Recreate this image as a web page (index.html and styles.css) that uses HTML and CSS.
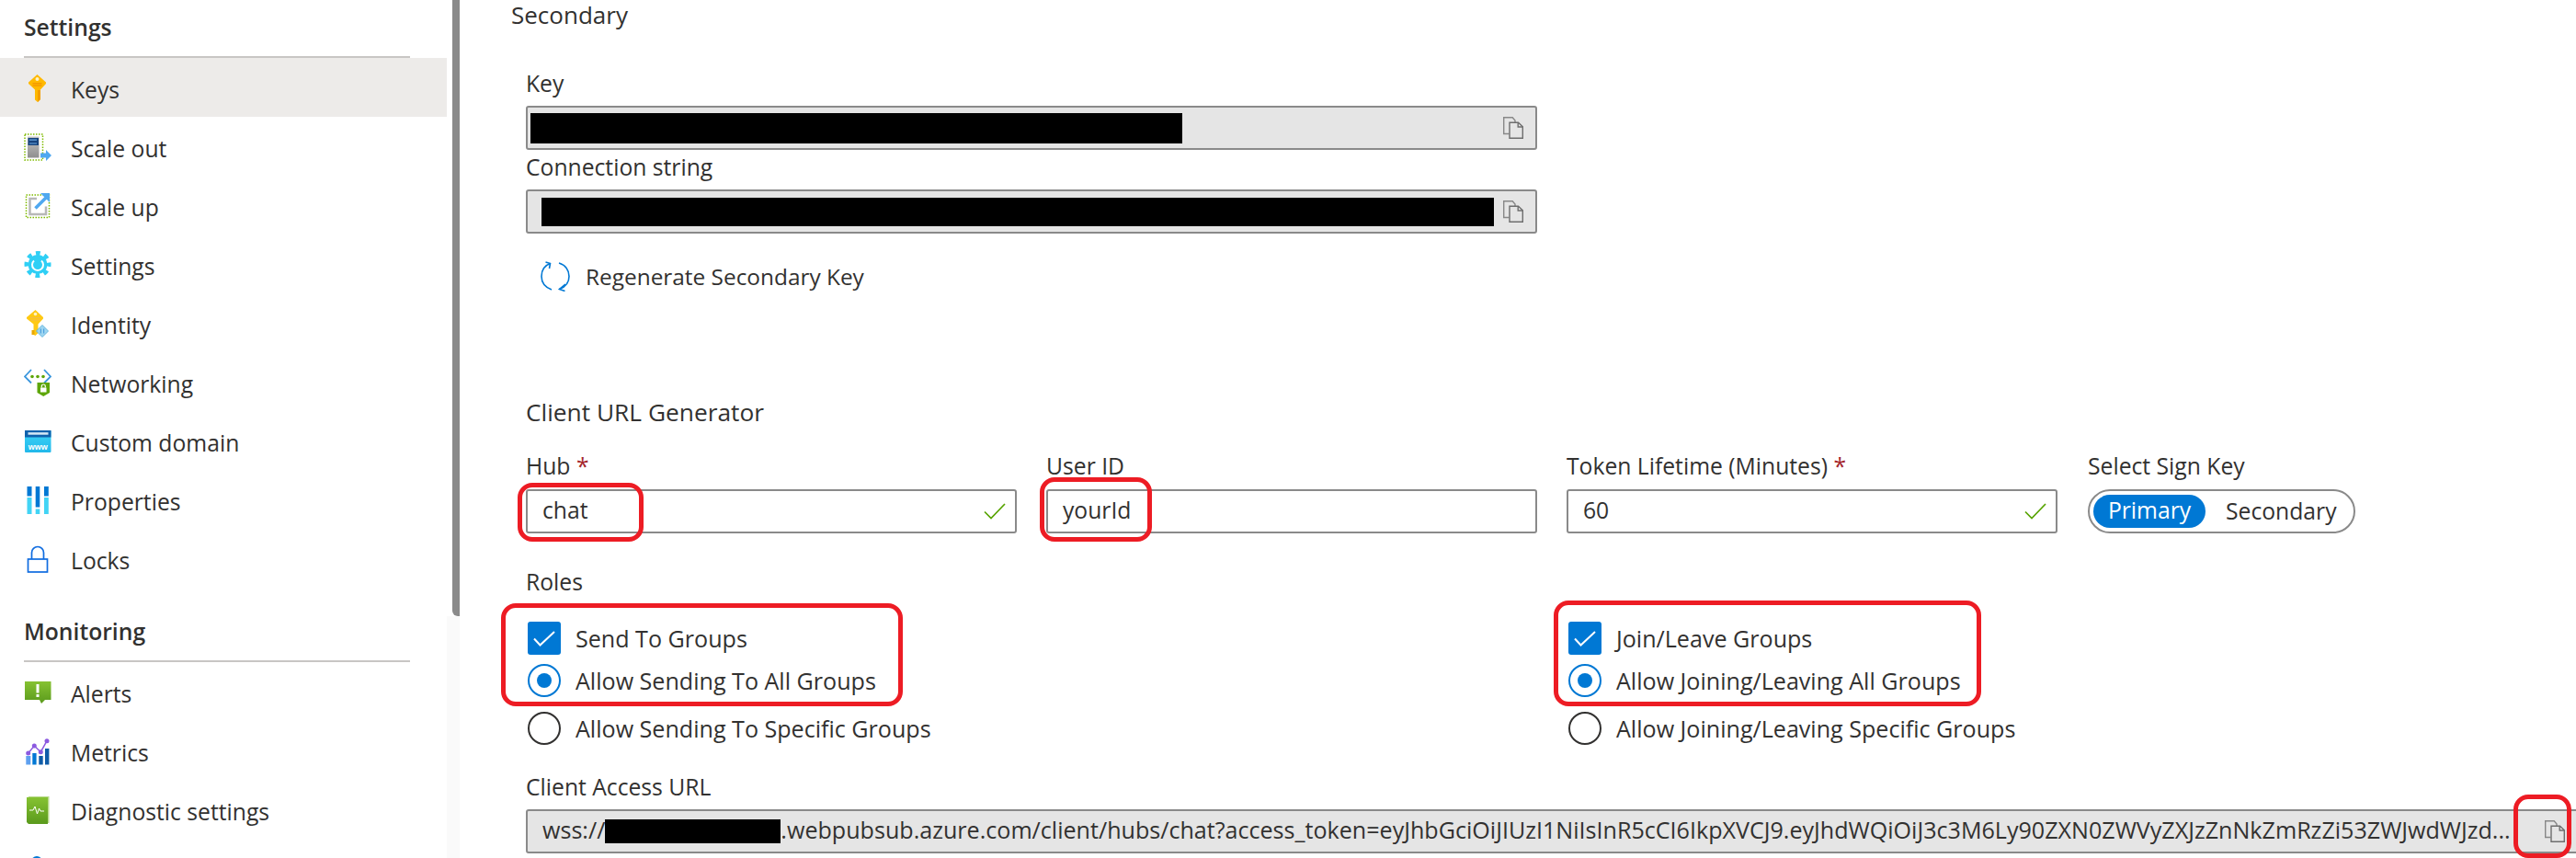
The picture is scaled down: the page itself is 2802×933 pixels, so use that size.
FILE: index.html
```html
<!DOCTYPE html>
<html>
<head>
  <title>Keys - Web PubSub</title>
  <link rel="stylesheet" href="styles.css">
</head>
<body>
<svg class="defs" width="0" height="0">
  <defs>
    <linearGradient id="grey" x1="0" y1="0" x2="0" y2="1"><stop offset="0" stop-color="#c4c4c4"/><stop offset="1" stop-color="#8f8f8f"/></linearGradient>
    <linearGradient id="green" x1="0" y1="0" x2="0" y2="1"><stop offset="0" stop-color="#86c232"/><stop offset="1" stop-color="#5a9a1c"/></linearGradient>
    <linearGradient id="cyan" x1="0" y1="0" x2="0" y2="1"><stop offset="0" stop-color="#3cd4f7"/><stop offset="1" stop-color="#22b8ea"/></linearGradient>
    <symbol id="copy" viewBox="0 0 22 24">
      <path d="M6.5 18.5H.7V.7h9.5L13 4v2" fill="none" stroke="#888" stroke-width="1.4"/>
      <path d="M7 6.2h9.5l4.8 4.6v12.5H7z" fill="none" stroke="#6e6e6e" stroke-width="1.4"/>
      <path d="M16.2 6.2v4.8h5" fill="none" stroke="#6e6e6e" stroke-width="1.4"/>
    </symbol>
    <symbol id="valid" viewBox="0 0 24 18">
      <path d="M1 9.5 8 16.5 23 1" fill="none" stroke="#57a300" stroke-width="1.7"/>
    </symbol>
    <symbol id="tick" viewBox="0 0 36 36">
      <path d="M7 18.5 13.5 25.5 29 11" fill="none" stroke="#fff" stroke-width="2"/>
    </symbol>
  </defs>
</svg>

<div class="page">
  <nav class="sidebar">
    <div class="nav-title first">Settings</div>
    <a class="nav-item selected">
      <svg class="nav-icon" viewBox="0 0 30 30">
        <path d="M14.500 0 24 8.500v1.500l-6 6.500V27l-3 3-3-2.500V16.500L5 10V8.500z" fill="#ffb900"/>
        <path d="M15 17h3v10l-3 3z" fill="#f29d00"/>
        <circle cx="14.500" cy="5" r="2" fill="#fff3c4"/>
        <path d="M9.500 9.800h10M9.500 12h10" stroke="#f08a00" stroke-width="1"/>
      </svg>
      Keys
    </a>
    <a class="nav-item">
      <svg class="nav-icon" viewBox="0 0 30 30">
        <rect x="1" y="1" width="19.500" height="28" fill="none" stroke="#7fba00" stroke-width="1.500" stroke-dasharray="1.500 1.500"/>
        <rect x="4" y="3.500" width="12.500" height="23" fill="url(#grey)"/>
        <rect x="4.500" y="5" width="11.500" height="8" fill="#17437c"/>
        <path d="M6 7.200h8M6 11h8" stroke="#6aa5e0" stroke-width="1.200"/>
        <path d="M18 21.500h6V18l6 6-6 6v-3.500h-6z" fill="#4fa8f0"/>
      </svg>
      Scale out
    </a>
    <a class="nav-item">
      <svg class="nav-icon" viewBox="0 0 30 30">
        <rect x="2.500" y="3" width="25" height="24.500" fill="none" stroke="#7fba00" stroke-width="1.500" stroke-dasharray="1.500 1.500"/>
        <path d="M14 7H6.500v17H24v-8.500" fill="none" stroke="#b8b8b8" stroke-width="2.500"/>
        <path d="M12.500 17.500 24 6" stroke="#4fa8f0" stroke-width="3.500"/>
        <path d="M18 1h10v10z" fill="#4fa8f0"/>
      </svg>
      Scale up
    </a>
    <a class="nav-item">
      <svg class="nav-icon" viewBox="0 0 30 30">
        <circle cx="15" cy="14.500" r="10.500" fill="#2fcff5"/>
        <circle cx="15" cy="14.500" r="12" fill="none" stroke="#2fcff5" stroke-width="5" stroke-dasharray="4.700 4.720" stroke-dashoffset="2.350"/>
        <path d="M11 10.500a6 6 0 1 0 8 0" fill="none" stroke="#fff" stroke-width="2"/>
      </svg>
      Settings
    </a>
    <a class="nav-item">
      <svg class="nav-icon" viewBox="0 0 30 30">
        <path d="M12.500 0 21 8v1.500l-5.500 6V25l-3 3-2-1V15.500L3 9.500V8z" fill="#ffc914"/>
        <path d="M8.500 22h3v5h-3z" fill="#eba900"/>
        <circle cx="12.500" cy="4.500" r="1.800" fill="#fff3c4"/>
        <path d="M7 8.500h11M7 11h11" stroke="#f2bb4a" stroke-width="1"/>
        <path d="M20 16.500 26.500 23 20 29.500 13.500 23z" fill="#9fd6f0" stroke="#62b4de" stroke-width="1"/>
        <path d="M18.300 20.500v5M21.700 20.500v5" stroke="#3a96dd" stroke-width="1"/>
      </svg>
      Identity
    </a>
    <a class="nav-item">
      <svg class="nav-icon" viewBox="0 0 30 30">
        <path d="M8 1 1 8.500 8 15.500M22 1l7 7.500-7 7" fill="none" stroke="#3a96dd" stroke-width="1.800"/>
        <circle cx="9" cy="8.500" r="1.800" fill="#5ea60a"/>
        <circle cx="15" cy="8.500" r="1.800" fill="#5ea60a"/>
        <circle cx="21" cy="8.500" r="1.800" fill="#5ea60a"/>
        <path d="M14.500 15h13.500v11l-6.750 4-6.750-4z" fill="#5ea60a"/>
        <rect x="18" y="20.500" width="6.500" height="5" fill="#fff"/>
        <path d="M19.300 20.500v-1.500a2 2 0 0 1 4 0v1.500" fill="none" stroke="#fff" stroke-width="1.200"/>
      </svg>
      Networking
    </a>
    <a class="nav-item">
      <svg class="nav-icon" viewBox="0 0 30 30">
        <rect x="1" y="3" width="28.500" height="24" rx="1" fill="url(#cyan)"/>
        <rect x="1" y="3" width="28.500" height="7.500" fill="#0f62ad"/>
        <rect x="4.500" y="5.200" width="22" height="2.500" fill="#d5e8f6"/>
        <text class="www" x="15.200" y="24" text-anchor="middle">www</text>
      </svg>
      Custom domain
    </a>
    <a class="nav-item">
      <svg class="nav-icon" viewBox="0 0 30 30">
        <path d="M3.500 0h5v10.500h-5zM12.700 0h4.600v22.500h-4.600zM22 0h4.800v10.500H22z" fill="#0078d4"/>
        <path d="M3.500 12h5v18h-5zM12.700 24.500h4.600V30h-4.600zM22 12h4.800v18H22z" fill="#42d4f5"/>
      </svg>
      Properties
    </a>
    <a class="nav-item">
      <svg class="nav-icon" viewBox="0 0 30 30">
        <rect x="4.500" y="15" width="21" height="14" fill="none" stroke="#0f6ce0" stroke-width="1.700"/>
        <path d="M8.500 15V8a6.500 6.500 0 0 1 13 0v7" fill="none" stroke="#0f6ce0" stroke-width="1.700"/>
      </svg>
      Locks
    </a>
    <div class="nav-title">Monitoring</div>
    <a class="nav-item">
      <svg class="nav-icon" viewBox="0 0 30 30">
        <path d="M1 3h28.500v20H23l-4 4-2-4H1z" fill="url(#green)"/>
        <rect x="13.500" y="6" width="3" height="9.500" fill="#fff"/>
        <rect x="13.500" y="17" width="3" height="3" fill="#fff"/>
      </svg>
      Alerts
    </a>
    <a class="nav-item">
      <svg class="nav-icon" viewBox="0 0 30 30">
        <path d="M2.300 20h5v9.500h-5z" fill="#5ea0ef"/>
        <path d="M9.300 17h4.300v12.500H9.300z" fill="#0078d4"/>
        <path d="M16.300 20h4.400v9.500h-4.400zM23 12h4.400v17.500H23z" fill="#0f5ca8"/>
        <path d="M4.700 17 11.300 9l7 6.700L25 3.700" fill="none" stroke="#8c5ae0" stroke-width="1.500"/>
        <circle cx="4.700" cy="17" r="2.500" fill="#8c5ae0"/>
        <circle cx="11.300" cy="9" r="2.500" fill="#8c5ae0"/>
        <circle cx="18.300" cy="15.700" r="2.500" fill="#8c5ae0"/>
        <circle cx="25" cy="3.700" r="2.500" fill="#8c5ae0"/>
      </svg>
      Metrics
    </a>
    <a class="nav-item">
      <svg class="nav-icon" viewBox="0 0 30 30">
        <path d="M5 0h22.500v29H5z" fill="#b7d98a"/>
        <path d="M3 1h23v29H5l-2-2z" fill="url(#green)"/>
        <path d="M6 15h4l2-4 2.500 8 2-6 1.500 3h4" fill="none" stroke="#fff" stroke-width="1"/>
      </svg>
      Diagnostic settings
    </a>
    <a class="nav-item">
      <svg class="nav-icon" viewBox="0 0 30 30"><circle cx="14" cy="7" r="6" fill="#0078d4"/></svg>
    </a>
  </nav>

  <div class="scroll-track"><div class="scroll-thumb"></div></div>

  <main class="main">
    <h2 class="heading">Secondary</h2>
    <div class="content">
      <label class="label key-label">Key</label>
      <div class="field readonly">
        <div class="redact key-redact"></div>
        <svg class="copy"><use href="#copy"/></svg>
      </div>
      <label class="label conn-label">Connection string</label>
      <div class="field readonly">
        <div class="redact conn-redact"></div>
        <svg class="copy"><use href="#copy"/></svg>
      </div>
      <div class="regen">
        <svg class="regen-icon" viewBox="0 0 32 33">
          <path d="M10.500 2.500C3.500 5 1 11 1 16.500 1 22 4 28 12 31M20 2c7 2 11 8 11 14.500 0 6.500-4 11.500-10.500 14" fill="none" stroke="#0078d4" stroke-width="1.600"/>
          <path d="M5.500 1 10.500 2.500 9.500 8M27 25l-6.500 5.500 6 2" fill="none" stroke="#0078d4" stroke-width="1.600"/>
        </svg>
        <span>Regenerate Secondary Key</span>
      </div>

      <h3 class="subheading">Client URL Generator</h3>

      <div class="gen-row">
        <div>
          <label class="label">Hub <span class="req">*</span></label>
          <div class="field"><span>chat</span><svg class="valid"><use href="#valid"/></svg></div>
        </div>
        <div>
          <label class="label">User ID</label>
          <div class="field"><span>yourId</span></div>
        </div>
        <div>
          <label class="label">Token Lifetime (Minutes) <span class="req">*</span></label>
          <div class="field"><span>60</span><svg class="valid"><use href="#valid"/></svg></div>
        </div>
        <div>
          <label class="label">Select Sign Key</label>
          <div class="toggle">
            <span class="toggle-on">Primary</span>
            <span class="toggle-off">Secondary</span>
          </div>
        </div>
      </div>

      <label class="label roles-label">Roles</label>
      <div class="roles">
        <div class="role-col">
          <div class="opt"><span class="check"><svg><use href="#tick"/></svg></span>Send To Groups</div>
          <div class="opt"><span class="radio on"></span>Allow Sending To All Groups</div>
          <div class="opt last"><span class="radio"></span>Allow Sending To Specific Groups</div>
        </div>
        <div class="role-col">
          <div class="opt"><span class="check"><svg><use href="#tick"/></svg></span>Join/Leave Groups</div>
          <div class="opt"><span class="radio on"></span>Allow Joining/Leaving All Groups</div>
          <div class="opt last"><span class="radio"></span>Allow Joining/Leaving Specific Groups</div>
        </div>
      </div>

      <label class="label url-label">Client Access URL</label>
      <div class="field readonly url-field">
        <span>wss://</span><div class="redact url-redact"></div><span>.webpubsub.azure.com/client/hubs/chat?access_token=eyJhbGciOiJIUzI1NiIsInR5cCI6IkpXVCJ9.eyJhdWQiOiJ3c3M6Ly90ZXN0ZWVyZXJzZnNkZmRzZi53ZWJwdWJzd...</span>
        <svg class="copy"><use href="#copy"/></svg>
      </div>
    </div>
  </main>

  <!-- red callouts drawn over the screenshot -->
  <div class="mark mark-hub"></div>
  <div class="mark mark-user"></div>
  <div class="mark mark-send"></div>
  <div class="mark mark-join"></div>
  <div class="mark mark-copy"></div>
</div>
</body>
</html>
```

FILE: styles.css
```css
* {
  box-sizing: border-box;
}
html, body {
  margin: 0;
  height: 933px;
  overflow: hidden;
  background: #fff;
}
body {
  font-family: "Open Sans", "Noto Sans", sans-serif;
  font-size: 24.7px;
  color: #323130;
}
.defs {
  position: absolute;
}
.page {
  position: relative;
  display: flex;
  width: 2802px;
  height: 933px;
  overflow: hidden;
}

/* left menu */
.sidebar {
  flex: 0 0 486px;
  height: 933px;
  overflow: hidden;
}
.nav-title {
  height: 81px;
  margin: 0 40px 0 26px;
  padding-top: 32px;
  border-bottom: 2px solid #c8c6c4;
  font-weight: 600;
  line-height: 32px;
}
.nav-title.first {
  height: 63px;
  padding-top: 14px;
}
.nav-item {
  display: flex;
  align-items: center;
  height: 64px;
  padding: 4px 0 0 26px;
}
.nav-item.selected {
  background: #edebe9;
}
.nav-icon {
  flex: none;
  width: 30px;
  height: 30px;
  margin: -2px 21px 0 0;
}
.www {
  font-family: "Liberation Sans", sans-serif;
  font-size: 9px;
  font-weight: 700;
  fill: #fff;
}
.scroll-track {
  flex: 0 0 14px;
  padding-left: 6px;
  background: linear-gradient(#fff 670px, #fafafa 670px);
}
.scroll-thumb {
  width: 8px;
  height: 670px;
  background: #8a8a8a;
  border-radius: 0 0 0 6px;
}

/* main blade */
.main {
  flex: 1;
  min-width: 0;
  padding-left: 57px;
}
.heading {
  margin: 0 0 0 -1px;
  font-size: 26px;
  font-weight: 400;
  line-height: 32px;
}
.content {
  padding-left: 15px;
}
.label {
  display: block;
  line-height: 32px;
  white-space: nowrap;
}
.key-label {
  margin: 43px 0 8px;
}
.conn-label {
  margin: 3px 0 8px;
}
.req {
  color: #a4262c;
}
.field {
  display: flex;
  align-items: center;
  width: 100%;
  height: 48px;
  padding: 0 10px 0 16px;
  border: 2px solid #8a8a8a;
  border-radius: 3px;
  background: #fff;
  white-space: nowrap;
}
.field span {
  margin-bottom: 4px;
}
.readonly {
  width: 1100px;
  padding: 0 13px 0 3px;
  background: #e5e5e5;
}
.redact {
  flex: none;
  background: #000;
}
.key-redact {
  width: 709px;
  height: 33px;
}
.conn-redact {
  width: 1036px;
  height: 31px;
  margin-left: 12px;
}
.copy {
  flex: none;
  width: 22px;
  height: 24px;
  margin-left: auto;
}
.valid {
  flex: none;
  width: 24px;
  height: 18px;
  margin-left: auto;
}
.regen {
  display: flex;
  align-items: center;
  height: 34px;
  margin-top: 29px;
  padding-left: 16px;
  font-size: 24.4px;
}
.regen-icon {
  width: 32px;
  height: 33px;
  margin-right: 17px;
}
.subheading {
  margin: 115px 0 27px;
  font-size: 26.3px;
  font-weight: 400;
  line-height: 32px;
}
.gen-row {
  display: grid;
  grid-template-columns: 534px 534px 534px 291px;
  column-gap: 32px;
}
.gen-row .label {
  margin-bottom: 9px;
}
.gen-row > div:last-child {
  margin-left: 1px;
}
.toggle {
  display: flex;
  align-items: center;
  width: 291px;
  height: 48px;
  padding-left: 4px;
  border: 2px solid #8a8a8a;
  border-radius: 24px;
}
.toggle-on {
  display: block;
  width: 122px;
  height: 36px;
  border-radius: 18px;
  background: #0078d4;
  color: #fff;
  line-height: 33px;
  text-align: center;
}
.toggle-off {
  margin: -2px 0 0 22px;
}
.roles-label {
  margin-top: 37px;
}
.roles {
  display: grid;
  grid-template-columns: 1132px 1fr;
  margin-top: 27px;
  padding-left: 2px;
  font-size: 25.1px;
}
.opt {
  display: flex;
  align-items: center;
  height: 36px;
  margin-bottom: 10px;
  white-space: nowrap;
}
.opt.last {
  margin: 16px 0 0;
}
.check {
  flex: none;
  width: 36px;
  height: 36px;
  margin-right: 16px;
  border-radius: 3px;
  background: #0078d4;
}
.check svg {
  display: block;
  width: 36px;
  height: 36px;
}
.radio {
  flex: none;
  display: flex;
  align-items: center;
  justify-content: center;
  width: 36px;
  height: 36px;
  margin-right: 16px;
  border: 2px solid #323130;
  border-radius: 50%;
}
.radio.on {
  border-color: #0078d4;
}
.radio.on::after {
  content: "";
  width: 16px;
  height: 16px;
  border-radius: 50%;
  background: #0078d4;
}
.url-label {
  margin: 30px 0 8px;
}
.url-field {
  width: 2240px;
  padding: 0 20px 0 16px;
  font-size: 25.1px;
}
.url-redact {
  width: 191px;
  height: 26px;
}

/* annotations */
.mark {
  position: absolute;
  border: 5px solid #ed1c24;
  border-radius: 16px;
}
.mark-hub {
  left: 563px;
  top: 525px;
  width: 137px;
  height: 64px;
}
.mark-user {
  left: 1131px;
  top: 519px;
  width: 122px;
  height: 70px;
}
.mark-send {
  left: 545px;
  top: 656px;
  width: 437px;
  height: 112px;
}
.mark-join {
  left: 1690px;
  top: 653px;
  width: 465px;
  height: 115px;
}
.mark-copy {
  left: 2734px;
  top: 864px;
  width: 63px;
  height: 69px;
}
```
